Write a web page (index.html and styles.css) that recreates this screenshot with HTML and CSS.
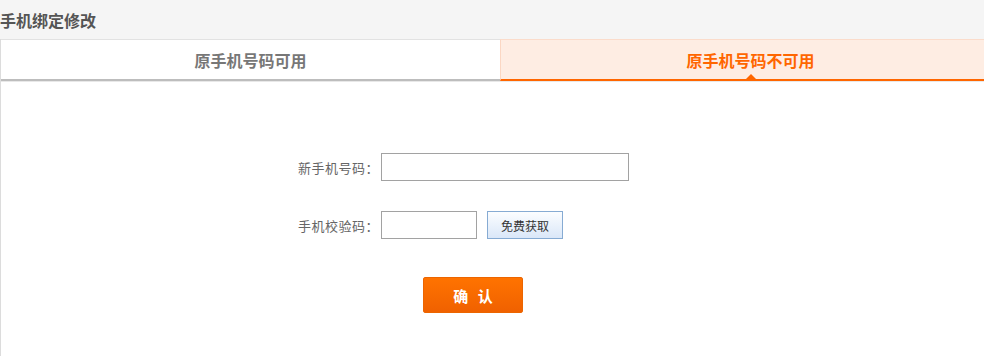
FILE: index.html
```html
<!DOCTYPE html>
<html lang="zh-CN">
<head>
<meta charset="utf-8">
<title>手机绑定修改</title>
<link rel="stylesheet" href="styles.css">
</head>
<body>
<div class="page">
  <div class="header">手机绑定修改</div>
  <div class="panel">
    <div class="tabs">
      <div class="tab">原手机号码可用</div>
      <div class="tab active">原手机号码不可用</div>
    </div>
    <div class="content">
      <div class="row">
        <label class="label">新手机号码：</label>
        <input class="input input-long" type="text">
      </div>
      <div class="row row-code">
        <label class="label">手机校验码：</label>
        <input class="input input-short" type="text">
        <button class="btn-code" type="button">免费获取</button>
      </div>
      <div class="row row-submit">
        <span class="label"></span>
        <button class="btn-submit" type="button">确&nbsp;认</button>
      </div>
    </div>
  </div>
</div>
</body>
</html>
```

FILE: styles.css
```css
html, body {
  margin: 0;
  padding: 0;
  overflow: hidden;
  background: #fff;
}
body {
  font-family: "Noto Sans CJK SC", "Liberation Sans", sans-serif;
  color: #666;
}
.page {
  width: 1000px;
}
.header {
  height: 39px;
  line-height: 40px;
  background: #f5f5f5;
  font-size: 16px;
  font-weight: bold;
  color: #555;
}
.panel {
  border-left: 1px solid #dcdcdc;
  height: 317px;
}
.tabs {
  display: flex;
  border-bottom: 1px solid #e8e8e8;
}
.tab {
  position: relative;
  box-sizing: border-box;
  width: 500px;
  height: 42px;
  line-height: 40px;
  text-align: center;
  font-size: 16px;
  font-weight: bold;
  color: #777;
  background: #fff;
  border-top: 1px solid #e2e2e2;
  border-bottom: 2px solid #bdbdbd;
}
.tab:first-child {
  width: 499px;
}
.tab.active {
  color: #ff6600;
  background: #feede3;
  border-top-color: #fbdccb;
  border-left: 1px solid #fbd7c3;
  border-bottom-color: #ff6600;
}
.tab.active::after {
  content: "";
  position: absolute;
  left: 50%;
  bottom: 0;
  margin-left: -5px;
  border-left: 5px solid transparent;
  border-right: 5px solid transparent;
  border-bottom: 5px solid #ff6600;
}
.content {
  padding-top: 71px;
}
.row {
  display: flex;
  align-items: center;
  height: 28px;
}
.row-code {
  margin-top: 30px;
}
.row-submit {
  margin-top: 38px;
  height: 36px;
}
.label {
  width: 380px;
  padding-right: 2px;
  box-sizing: border-box;
  text-align: right;
  font-family: "Noto Sans CJK JP", "Noto Sans CJK SC", sans-serif;
  font-size: 13px;
  letter-spacing: 0.5px;
  color: #666;
}
.input {
  box-sizing: border-box;
  height: 28px;
  border: 1px solid #a2a2a2;
  background: #fff;
  margin: 0;
  padding: 0 4px;
  font-size: 13px;
}
.input-long {
  width: 248px;
}
.input-short {
  width: 96px;
}
.btn-code {
  box-sizing: border-box;
  width: 76px;
  height: 28px;
  margin: 0 0 0 10px;
  padding: 0;
  border: 1px solid #86abd3;
  background: linear-gradient(#fbfdff, #dae7f8);
  font-family: inherit;
  font-size: 12px;
  color: #333;
}
.btn-submit {
  box-sizing: border-box;
  width: 100px;
  height: 36px;
  margin: 0 0 0 42px;
  padding: 0;
  border: 1px solid #ec6500;
  border-radius: 2px;
  background: linear-gradient(#ff7300, #f06100);
  font-family: inherit;
  font-size: 15px;
  font-weight: bold;
  letter-spacing: 3px;
  text-indent: 3px;
  color: #fff;
}
```
